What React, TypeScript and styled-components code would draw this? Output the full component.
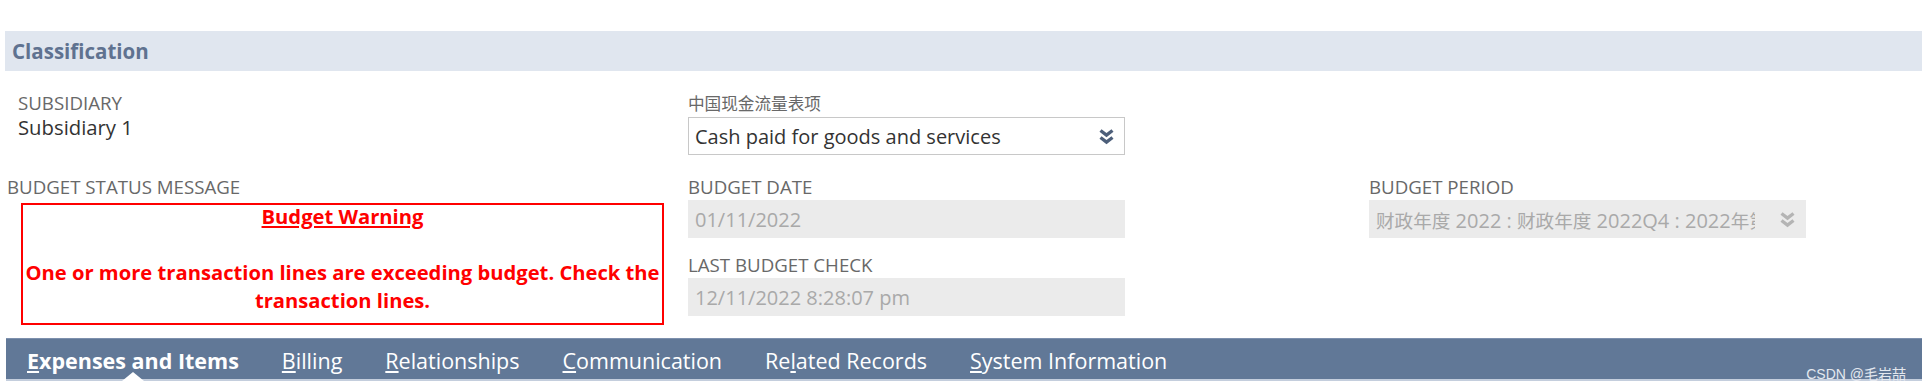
import React from 'react';
import styled, { createGlobalStyle } from 'styled-components';

const GlobalStyle = createGlobalStyle`
  body {
    margin: 0;
    background: #fff;
    font-family: "Open Sans", "Noto Sans CJK SC", sans-serif;
  }
`;

const Page = styled.div`
  position: relative;
  width: 1922px;
  height: 392px;
  padding-top: 31px;
  box-sizing: border-box;
  overflow: hidden;
`;

const SectionHeader = styled.div`
  margin-left: 5px;
  height: 40px;
  display: flex;
  align-items: center;
  padding-left: 7px;
  background: #e0e6ef;
  color: #5f7290;
  font-size: 20.5px;
  font-weight: 700;
`;

const FieldGrid = styled.div`
  display: grid;
  grid-template-columns: 681px 681px 1fr;
  padding-left: 7px;
  padding-top: 21px;
  row-gap: 21px;
`;

const Field = styled.div<{ $indent?: number }>`
  display: flex;
  flex-direction: column;
  padding-left: ${p => p.$indent ?? 0}px;
`;

const Label = styled.div`
  font-size: 18.7px;
  line-height: 22px;
  color: #686868;
  text-transform: uppercase;
  white-space: nowrap;
`;

const Cjk = styled.span<{ $scale?: number }>`
  font-size: ${p => p.$scale ?? 0.89}em;
`;

const Value = styled.div`
  font-size: 20.3px;
  line-height: 27px;
  color: #333;
`;

const Box = styled.div<{ $disabled?: boolean }>`
  margin-top: 2px;
  width: 437px;
  height: 38px;
  box-sizing: border-box;
  display: flex;
  align-items: center;
  padding: 1px 9px 0 6px;
  font-size: 20px;
  color: ${p => (p.$disabled ? '#a9a9a9' : '#333')};
  background: ${p => (p.$disabled ? '#ebebeb' : '#fff')};
  border: 1px solid ${p => (p.$disabled ? '#ebebeb' : '#c8c8c8')};
`;

const BoxText = styled.span<{ $gap?: number }>`
  flex: 1;
  margin-right: ${p => p.$gap ?? 0}px;
  white-space: nowrap;
  overflow: hidden;
`;

const Stack = styled.div`
  display: flex;
  flex-direction: column;
  gap: 16px;
`;

const WarningBox = styled.div`
  margin: 5px 0 0 14px;
  width: 643px;
  height: 122px;
  box-sizing: border-box;
  border: 2px solid #ff0000;
  color: #ff0000;
  font-size: 20.2px;
  font-weight: 700;
  text-align: center;
`;

const WarningTitle = styled.div`
  line-height: 22px;
  margin-bottom: 31px;
  text-decoration: underline;
`;

const WarningBody = styled.div`
  line-height: 28px;
`;

const TabBar = styled.div`
  margin: 13px 0 0 6px;
  height: 43px;
  box-sizing: border-box;
  display: flex;
  align-items: stretch;
  padding-left: 21px;
  gap: 43px;
  background: #617897;
  border-top: 1px solid #7d90ad;
  border-bottom: 2px solid #c4cedd;
`;

const Tab = styled.div<{ $active?: boolean }>`
  position: relative;
  display: flex;
  align-items: center;
  padding-top: 3px;
  color: #fff;
  font-size: 21.5px;
  font-weight: ${p => (p.$active ? 700 : 400)};
  white-space: nowrap;

  ${p =>
    p.$active &&
    `
    &::after {
      content: '';
      position: absolute;
      left: 50%;
      bottom: -2px;
      margin-left: -11px;
      border-left: 11px solid transparent;
      border-right: 11px solid transparent;
      border-bottom: 9px solid #fff;
    }
  `}
`;

const Watermark = styled.div`
  position: absolute;
  right: 16px;
  bottom: 9px;
  font-family: "Liberation Sans", "Noto Sans CJK SC", sans-serif;
  font-size: 14px;
  color: #e4e8ef;
`;

const Chevrons = ({ color }: { color: string }) => (
  <svg width="17" height="18" viewBox="0 0 17 18">
    <path d="M2.5 2.5 L8.5 7 L14.5 2.5" fill="none" stroke={color} strokeWidth="3.4" />
    <path d="M2.5 9.5 L8.5 14 L14.5 9.5" fill="none" stroke={color} strokeWidth="3.4" />
  </svg>
);

const tabs: { text: string; key: number; active?: boolean }[] = [
  { text: 'Expenses and Items', key: 0, active: true },
  { text: 'Billing', key: 0 },
  { text: 'Relationships', key: 0 },
  { text: 'Communication', key: 0 },
  { text: 'Related Records', key: 2 },
  { text: 'System Information', key: 0 },
];

const App: React.FC = () => {
  return (
    <Page>
      <GlobalStyle />
      <SectionHeader>Classification</SectionHeader>
      <FieldGrid>
        <Field $indent={11}>
          <Label>Subsidiary</Label>
          <Value>Subsidiary 1</Value>
        </Field>
        <Field>
          <Label><Cjk>中国现金流量表项</Cjk></Label>
          <Box>
            <BoxText>Cash paid for goods and services</BoxText>
            <Chevrons color="#4d5f7a" />
          </Box>
        </Field>
        <div />

        <Field>
          <Label>Budget Status Message</Label>
          <WarningBox>
            <WarningTitle>Budget Warning</WarningTitle>
            <WarningBody>
              One or more transaction lines are exceeding budget. Check the transaction lines.
            </WarningBody>
          </WarningBox>
        </Field>
        <Stack>
          <Field>
            <Label>Budget Date</Label>
            <Box $disabled>
              <BoxText>01/11/2022</BoxText>
            </Box>
          </Field>
          <Field>
            <Label>Last Budget Check</Label>
            <Box $disabled>
              <BoxText>12/11/2022 8:28:07 pm</BoxText>
            </Box>
          </Field>
        </Stack>
        <Field>
          <Label>Budget Period</Label>
          <Box $disabled>
            <BoxText $gap={24}>
              <Cjk $scale={0.93}>财政年度</Cjk> 2022 : <Cjk $scale={0.93}>财政年度</Cjk> 2022Q4 : 2022<Cjk $scale={0.93}>年第四季度</Cjk>
            </BoxText>
            <Chevrons color="#b4b4b4" />
          </Box>
        </Field>
      </FieldGrid>
      <TabBar>
        {tabs.map(t => (
          <Tab key={t.text} $active={t.active}>
            {t.text.slice(0, t.key)}
            <u>{t.text[t.key]}</u>
            {t.text.slice(t.key + 1)}
          </Tab>
        ))}
      </TabBar>
      <Watermark>CSDN @毛岩喆</Watermark>
    </Page>
  );
};

export default App;
